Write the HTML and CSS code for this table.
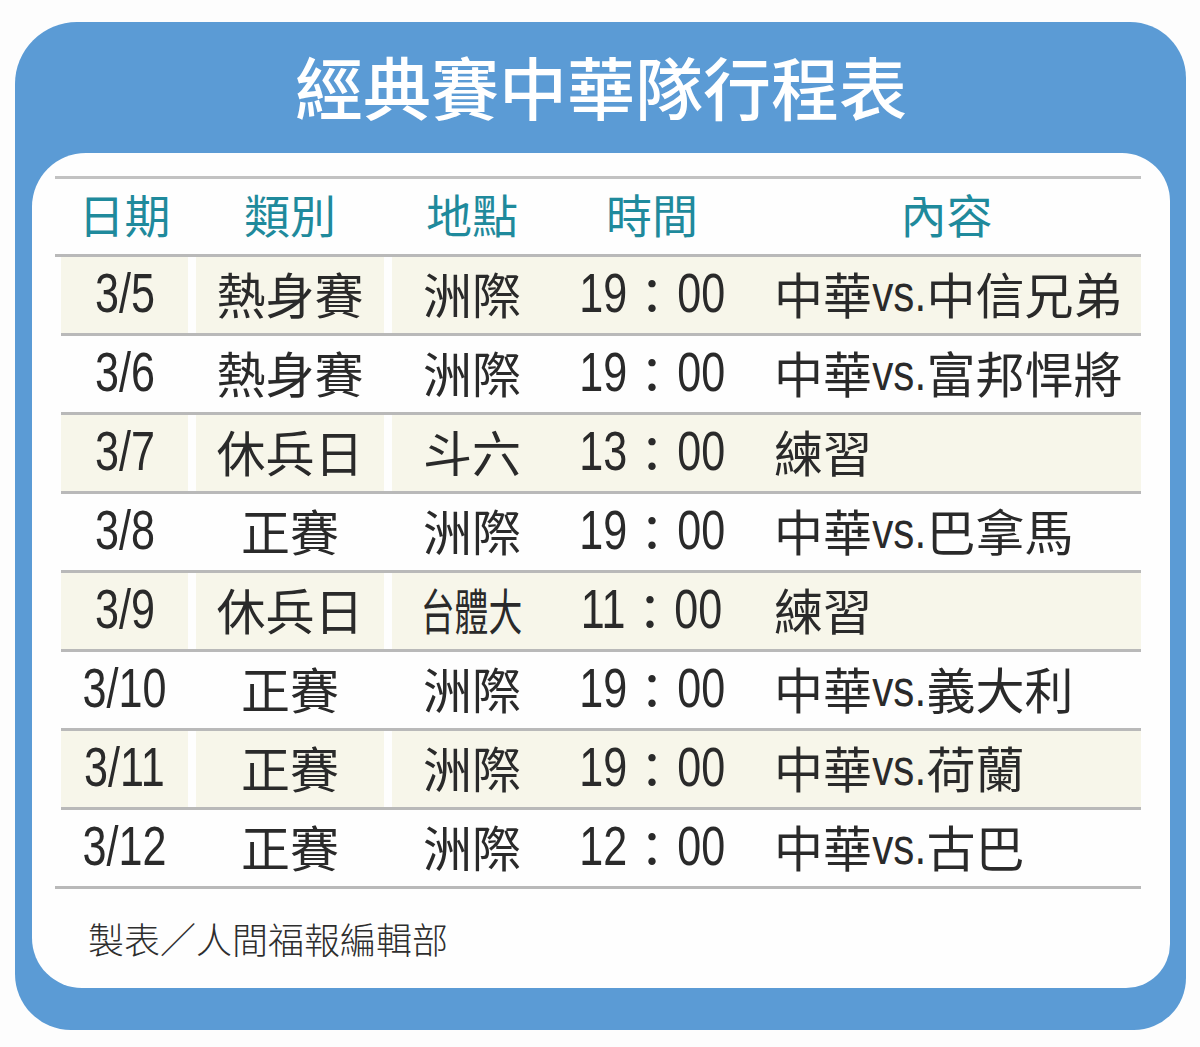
FILE: index.html
```html
<!DOCTYPE html>
<html lang="zh-Hant">
<head>
<meta charset="utf-8">
<title>經典賽中華隊行程表</title>
<link rel="stylesheet" href="styles.css">
</head>
<body>
<div class="panel">
  <h1 class="title">經典賽中華隊行程表</h1>
  <div class="card">
    <div class="table">
      <div class="row head">
        <div class="c c1">日期</div>
        <div class="c c2">類別</div>
        <div class="c c3">地點</div>
        <div class="c c4">時間</div>
        <div class="c c5 center">內容</div>
      </div>
      <div class="row alt">
        <div class="c c1"><span class="n">3/5</span></div>
        <div class="c c2">熱身賽</div>
        <div class="c c3">洲際</div>
        <div class="c c4"><span class="n t">19</span>：<span class="n t">00</span></div>
        <div class="c c5">中華<span class="v">vs.</span>中信兄弟</div>
      </div>
      <div class="row">
        <div class="c c1"><span class="n">3/6</span></div>
        <div class="c c2">熱身賽</div>
        <div class="c c3">洲際</div>
        <div class="c c4"><span class="n t">19</span>：<span class="n t">00</span></div>
        <div class="c c5">中華<span class="v">vs.</span>富邦悍將</div>
      </div>
      <div class="row alt">
        <div class="c c1"><span class="n">3/7</span></div>
        <div class="c c2">休兵日</div>
        <div class="c c3">斗六</div>
        <div class="c c4"><span class="n t">13</span>：<span class="n t">00</span></div>
        <div class="c c5">練習</div>
      </div>
      <div class="row">
        <div class="c c1"><span class="n">3/8</span></div>
        <div class="c c2">正賽</div>
        <div class="c c3">洲際</div>
        <div class="c c4"><span class="n t">19</span>：<span class="n t">00</span></div>
        <div class="c c5">中華<span class="v">vs.</span>巴拿馬</div>
      </div>
      <div class="row alt">
        <div class="c c1"><span class="n">3/9</span></div>
        <div class="c c2">休兵日</div>
        <div class="c c3"><span class="squeeze">台體大</span></div>
        <div class="c c4"><span class="n t">11</span>：<span class="n t">00</span></div>
        <div class="c c5">練習</div>
      </div>
      <div class="row">
        <div class="c c1"><span class="n">3/10</span></div>
        <div class="c c2">正賽</div>
        <div class="c c3">洲際</div>
        <div class="c c4"><span class="n t">19</span>：<span class="n t">00</span></div>
        <div class="c c5">中華<span class="v">vs.</span>義大利</div>
      </div>
      <div class="row alt">
        <div class="c c1"><span class="n">3/11</span></div>
        <div class="c c2">正賽</div>
        <div class="c c3">洲際</div>
        <div class="c c4"><span class="n t">19</span>：<span class="n t">00</span></div>
        <div class="c c5">中華<span class="v">vs.</span>荷蘭</div>
      </div>
      <div class="row last">
        <div class="c c1"><span class="n">3/12</span></div>
        <div class="c c2">正賽</div>
        <div class="c c3">洲際</div>
        <div class="c c4"><span class="n t">12</span>：<span class="n t">00</span></div>
        <div class="c c5">中華<span class="v">vs.</span>古巴</div>
      </div>
    </div>
    <p class="credit">製表／人間福報編輯部</p>
  </div>
</div>
</body>
</html>
```

FILE: styles.css
```css
html, body {
  margin: 0;
  padding: 0;
  background: #fdfdfd;
}

body {
  font-family: "Noto Sans CJK TC", "Noto Sans CJK SC", sans-serif;
  width: 1200px;
  height: 1047px;
  overflow: hidden;
}

.panel {
  margin: 22px 0 0 15px;
  width: 1171px;
  height: 1008px;
  box-sizing: border-box;
  background: #5b9bd5;
  border-radius: 62px 56px 52px 56px;
  padding: 0 16px 0 17px;
}

.title {
  margin: 0;
  height: 131px;
  display: flex;
  align-items: center;
  justify-content: center;
  color: #ffffff;
  font-size: 68px;
  font-weight: 500;
  line-height: 1;
  padding-bottom: 4px;
  box-sizing: border-box;
}

.card {
  background: #fefefe;
  height: 835px;
  border-radius: 54px 48px 44px 50px;
  padding: 23px 29px 0 23px;
  box-sizing: border-box;
}

.table {
  border-top: 3px solid #c2c2c2;
  border-bottom: 3px solid #b9b9b9;
}

.row {
  display: grid;
  grid-template-columns: 135px 196px 160px 200px 1fr;
  height: 76px;
  margin-left: 6px;
  border-bottom: 3px solid #b9b9b9;
  color: #2a2a2a;
  font-size: 49px;
  line-height: 1;
}

.row.head {
  height: 78px;
  margin-left: 0;
  padding-left: 6px;
  padding-bottom: 8px;
  box-sizing: border-box;
  color: #1f8a9c;
  font-size: 46px;
}

.row.last {
  border-bottom: none;
}

.c {
  display: flex;
  align-items: center;
  justify-content: center;
  white-space: nowrap;
  padding-bottom: 6px;
  box-sizing: border-box;
}

.row.head .c {
  padding-bottom: 0;
}

.c1, .c2 {
  border-right: 8px solid transparent;
  background-clip: padding-box;
}

.row.alt .c {
  background-color: #f7f6ea;
}

.c5 {
  justify-content: flex-start;
  padding-left: 22px;
}

.c5.center {
  justify-content: center;
  padding-left: 0;
}

.n {
  display: inline-block;
  font-family: "Liberation Sans", sans-serif;
  font-size: 56px;
  transform: scaleX(0.77);
  transform-origin: center;
  position: relative;
  top: 1px;
}

.n.t {
  margin: 0 -7px;
}

.v {
  display: inline-block;
  font-family: "Liberation Sans", sans-serif;
  font-size: 52px;
  transform: scaleX(0.81);
  transform-origin: center;
  margin: 0 -6px;
  position: relative;
  top: 1px;
}

.squeeze {
  display: inline-block;
  transform: scaleX(0.69);
  transform-origin: center;
}

.credit {
  margin: 30px 0 0 33px;
  font-size: 36px;
  font-weight: 300;
  line-height: 1.1;
  color: #2e2e2e;
}
```
